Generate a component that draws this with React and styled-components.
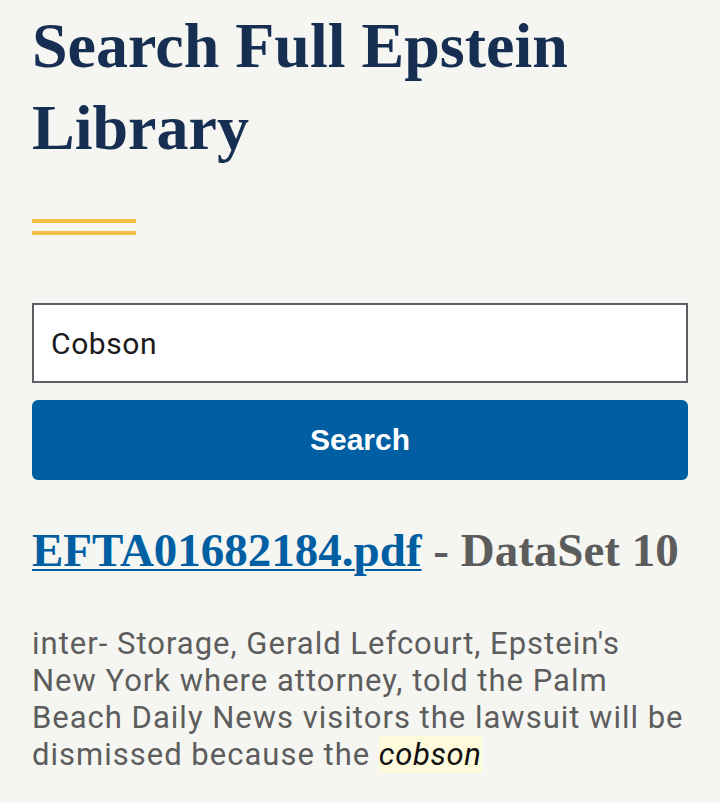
import styled, { createGlobalStyle } from 'styled-components';

const GlobalStyle = createGlobalStyle`
  html, body {
    margin: 0;
    padding: 0;
    background: #f5f6f1;
  }
  * {
    box-sizing: border-box;
  }
`;

const Page = styled.main`
  padding: 5px 32px 0;
  min-height: 803px;
  background: #f5f6f1;
`;

const Title = styled.h1`
  margin: 0;
  font-family: "Liberation Serif", "DejaVu Serif", serif;
  font-weight: 700;
  font-size: 64px;
  line-height: 82px;
  color: #162e51;
`;

const Rule = styled.div`
  margin-top: 50px;
  width: 104px;
  height: 16px;
  border-top: 4px solid #f1c044;
  border-bottom: 4px solid #f1c044;
`;

const SearchForm = styled.form`
  margin-top: 68px;
  display: flex;
  flex-direction: column;
  gap: 17px;
`;

const Input = styled.input`
  width: 100%;
  height: 80px;
  border: 2px solid #5b5f66;
  border-radius: 0;
  background: #fff;
  padding: 0 17px;
  font-family: Roboto, "Liberation Sans", sans-serif;
  font-size: 30px;
  letter-spacing: 0.6px;
  color: #1b1b1b;
  outline: none;
`;

const Button = styled.button`
  width: 100%;
  height: 80px;
  border: none;
  border-radius: 6px;
  background: #005ea2;
  color: #fff;
  font-family: "Liberation Sans", Arial, sans-serif;
  font-weight: 700;
  font-size: 30px;
  cursor: pointer;
`;

const Result = styled.article`
  margin-top: 42px;
`;

const ResultTitle = styled.h2`
  margin: 0;
  font-family: "Liberation Serif", "DejaVu Serif", serif;
  font-weight: 700;
  font-size: 47px;
  line-height: 56px;
  color: #5c5c5c;
  white-space: nowrap;
`;

const FileLink = styled.a`
  color: #005ea2;
  text-decoration: underline;
  text-decoration-thickness: 2px;
  text-underline-offset: 3px;
`;

const Snippet = styled.p`
  margin: 47px 0 0;
  font-family: Roboto, "Liberation Sans", sans-serif;
  font-size: 31px;
  line-height: 37px;
  letter-spacing: 1px;
  color: #5d5d5d;
`;

const Mark = styled.mark`
  background: #fdfbdc;
  color: #111;
  font-style: italic;
  letter-spacing: 0.6px;
`;

export default function App() {
  return (
    <>
      <GlobalStyle />
      <Page>
        <Title>Search Full Epstein Library</Title>
        <Rule />
        <SearchForm onSubmit={(e) => e.preventDefault()}>
          <Input type="text" defaultValue="Cobson" />
          <Button type="submit">Search</Button>
        </SearchForm>
        <Result>
          <ResultTitle>
            <FileLink href="#">EFTA01682184.pdf</FileLink> - DataSet 10
          </ResultTitle>
          <Snippet>
            inter- Storage, Gerald Lefcourt, Epstein's
            <br />
            New York where attorney, told the Palm
            <br />
            Beach Daily News visitors the lawsuit will be
            <br />
            dismissed because the <Mark>cobson</Mark>
          </Snippet>
        </Result>
      </Page>
    </>
  );
}
